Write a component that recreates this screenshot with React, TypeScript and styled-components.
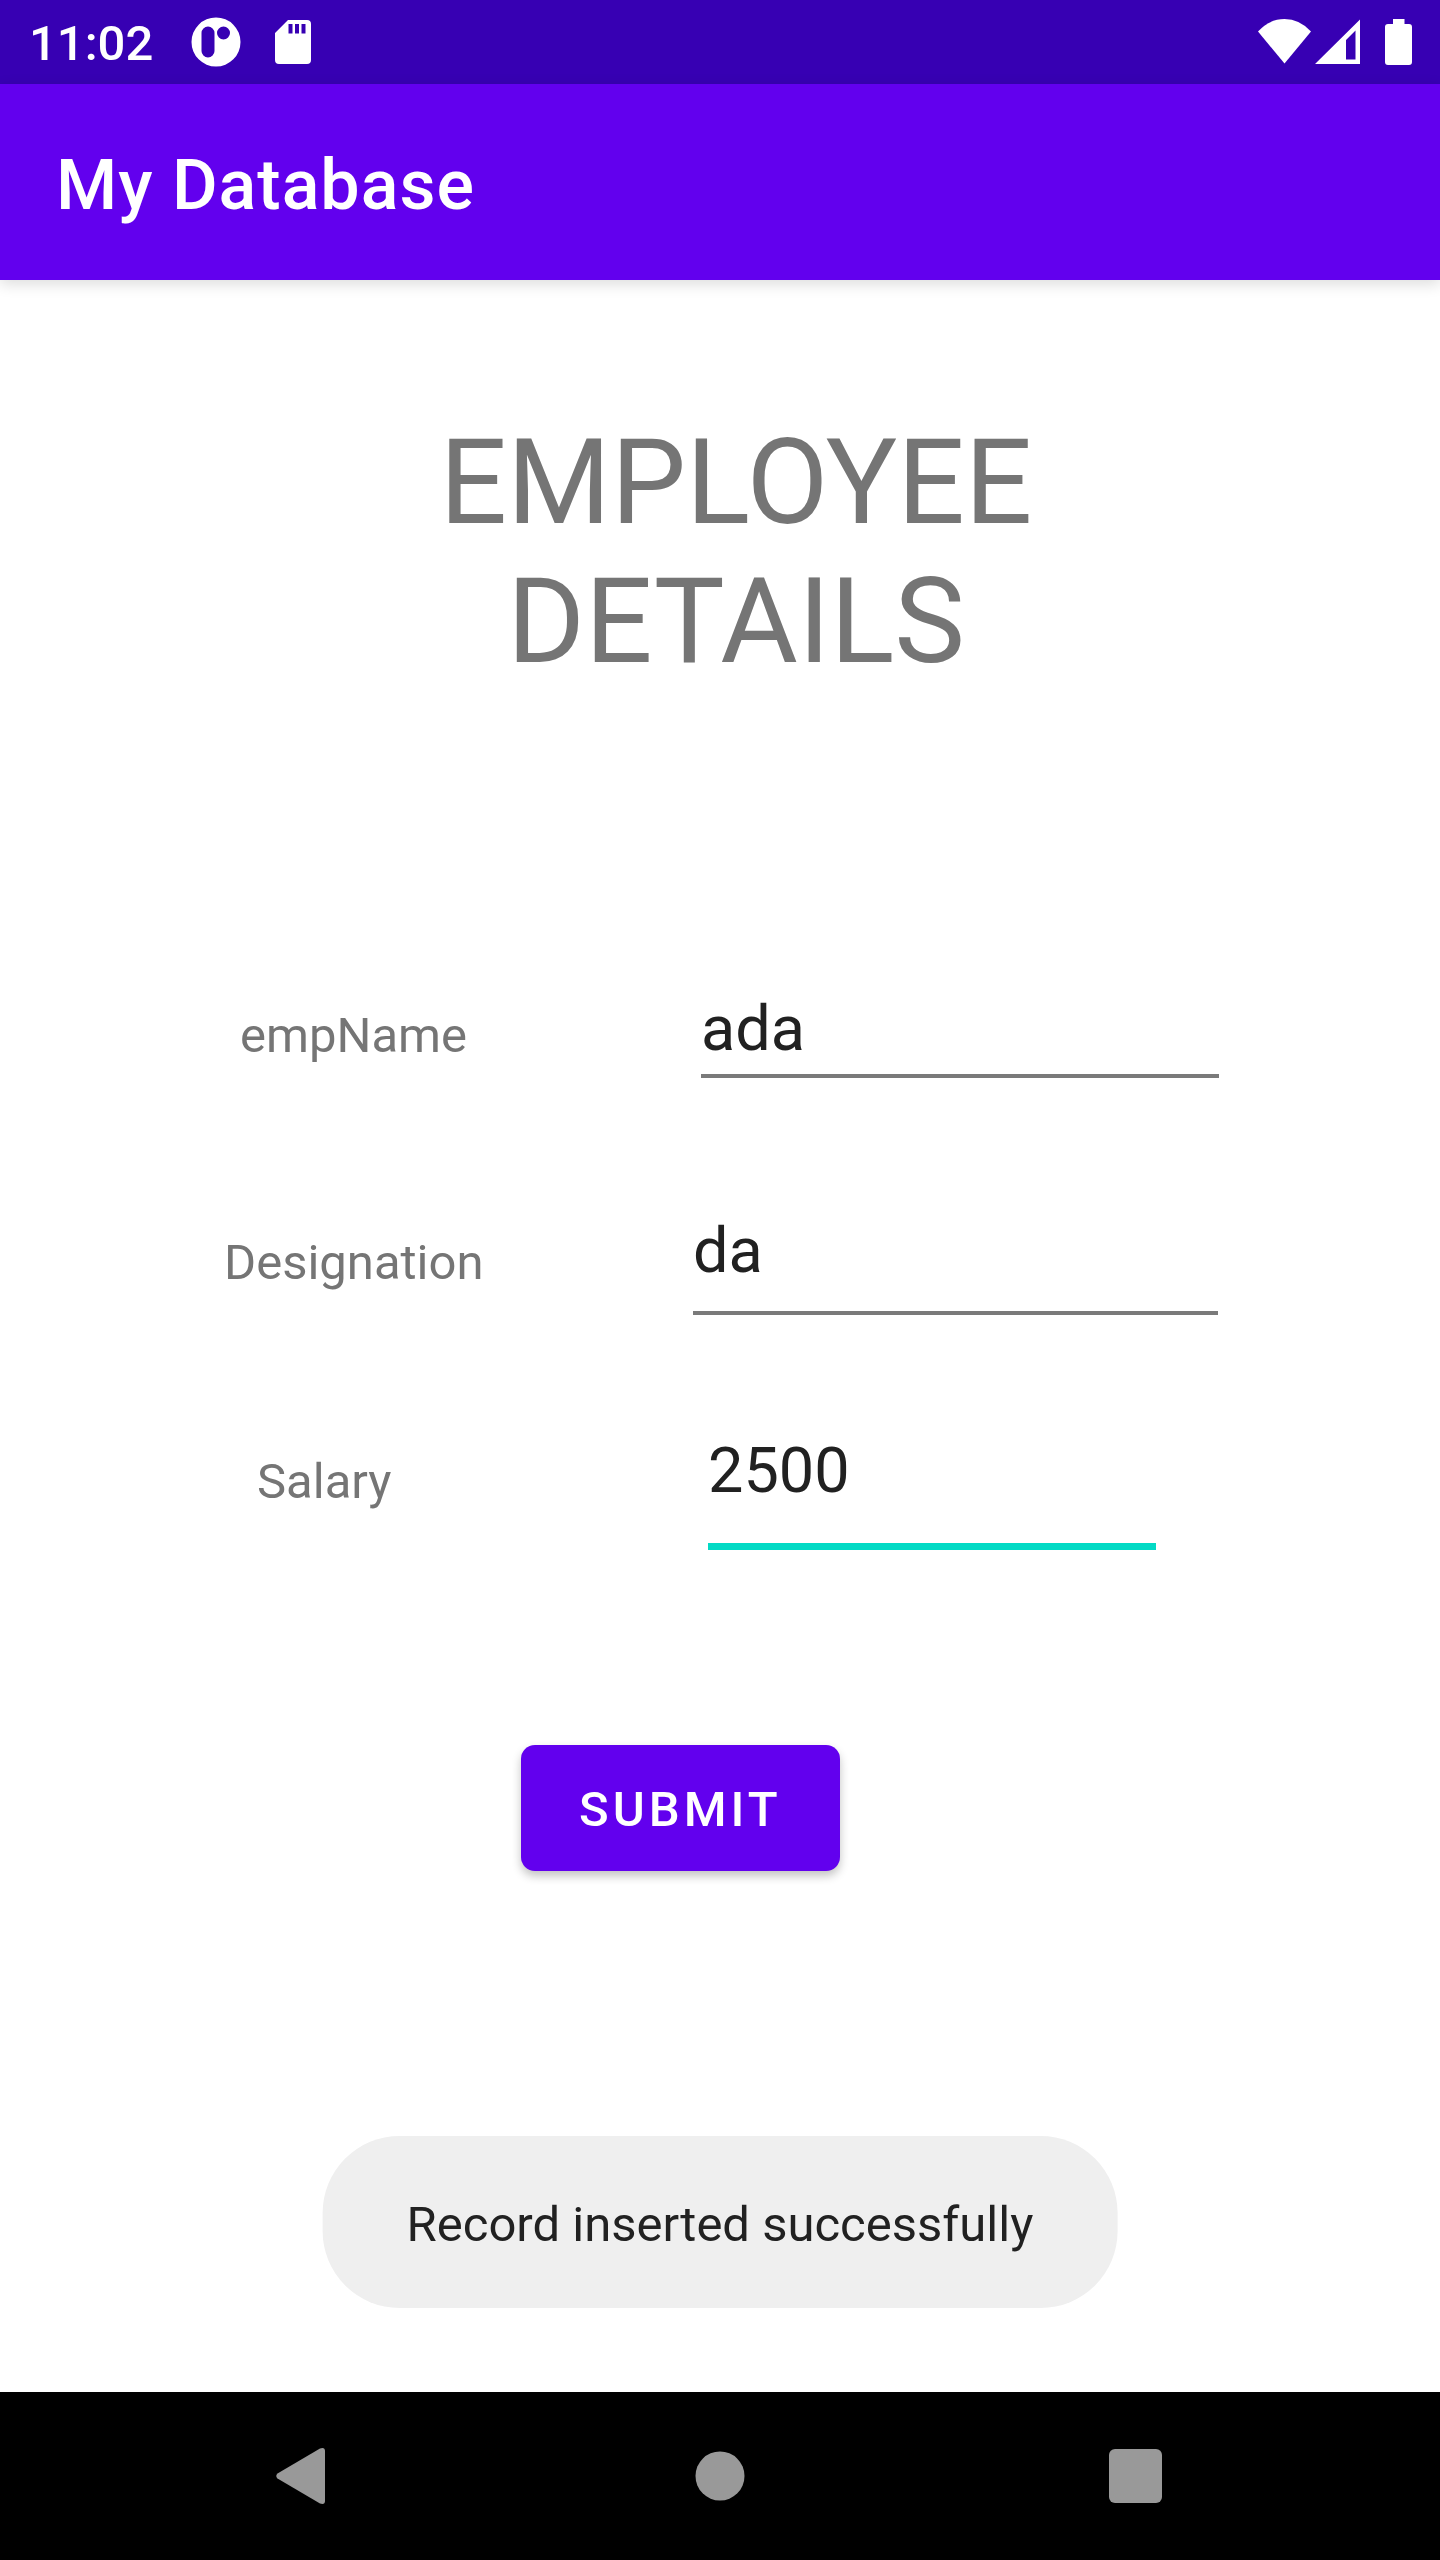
import React from "react";
import styled, { createGlobalStyle } from "styled-components";

const GlobalStyle = createGlobalStyle`
  *, *::before, *::after { box-sizing: border-box; }
  body { margin: 0; background: #fff; font-family: Roboto, "Noto Sans", sans-serif; }
`;

const Screen = styled.div`
  min-height: 100vh;
  display: flex;
  flex-direction: column;
`;

const StatusBar = styled.div`
  height: 84px;
  padding: 0 27px 0 29px;
  display: flex;
  align-items: center;
  justify-content: space-between;
  background: #3700b3;
  color: #fff;
`;

const StatusGroup = styled.div<{ $gap: number }>`
  display: flex;
  align-items: center;
  gap: ${(p) => p.$gap}px;

  svg { display: block; fill: currentColor; }
`;

const Clock = styled.time`
  margin-right: 4px;
  padding-top: 4px;
  font-size: 49px;
  font-weight: 500;
  line-height: 58px;
`;

const AppBar = styled.header`
  position: relative;
  height: 196px;
  padding: 6px 56px 0;
  display: flex;
  align-items: center;
  background: #6200ee;
  color: #fff;
  box-shadow: 0 4px 14px rgba(0, 0, 0, 0.14);
`;

const AppTitle = styled.h1`
  margin: 0;
  font-size: 70px;
  font-weight: 500;
  line-height: 82px;
  letter-spacing: 1px;
`;

const Content = styled.main`
  position: relative;
  flex: 1;
  padding: 133px 0 180px;
`;

const Heading = styled.h2`
  width: 640px;
  max-width: 100%;
  margin: 0 auto 300px;
  padding-left: 32px;
  box-sizing: content-box;
  color: #757575;
  font-size: 119px;
  font-weight: 400;
  line-height: 139px;
  text-align: center;
`;

const Form = styled.form`
  display: flex;
  flex-direction: column;
`;

const Row = styled.div<{ $columns: string; $space: number }>`
  display: grid;
  grid-template-columns: ${(p) => p.$columns};
  margin-bottom: ${(p) => p.$space}px;
`;

const Label = styled.label<{ $top: number }>`
  grid-column: 2;
  padding-top: ${(p) => p.$top}px;
  color: #757575;
  font-size: 49px;
  line-height: 57px;
`;

const Field = styled.input<{ $drop: number; $active?: boolean }>`
  grid-column: 3;
  width: 100%;
  min-width: 0;
  height: ${(p) => 74 + p.$drop + (p.$active ? 7 : 4)}px;
  margin: 0;
  padding: 0 0 ${(p) => p.$drop}px;
  border: 0;
  border-bottom: ${(p) => (p.$active ? "7px solid #03dac5" : "4px solid #7a7a7a")};
  border-radius: 0;
  outline: none;
  background: transparent;
  color: #212121;
  font-family: inherit;
  font-size: 63px;
  line-height: 74px;
`;

const Actions = styled.div`
  display: grid;
  grid-template-columns: 521fr 919fr;
`;

const SubmitButton = styled.button`
  grid-column: 2;
  justify-self: start;
  height: 126px;
  padding: 4px 58px 0;
  border: 0;
  border-radius: 14px;
  background: #6200ee;
  color: #fff;
  font-family: inherit;
  font-size: 49px;
  font-weight: 500;
  line-height: 58px;
  letter-spacing: 4px;
  box-shadow: 0 5px 10px rgba(0, 0, 0, 0.24);
`;

/* Floats over the lower edge of the content */
const Toast = styled.div`
  position: absolute;
  left: 50%;
  bottom: 84px;
  transform: translateX(-50%);
  padding: 60px 84px 55px;
  border-radius: 77px;
  background: #efefef;
  color: #212121;
  font-size: 49px;
  line-height: 57px;
  white-space: nowrap;
`;

const NavBar = styled.nav`
  height: 168px;
  padding: 0 96px;
  display: grid;
  grid-template-columns: repeat(3, 1fr);
  background: #000;
`;

const NavButton = styled.button`
  display: flex;
  align-items: center;
  justify-content: center;
  padding: 0;
  border: 0;
  background: transparent;
  color: #999;

  svg { display: block; fill: currentColor; }
`;

const fields = [
  { id: "empName", label: "empName", value: "ada", start: 240, field: 701, end: 1219, top: 16, drop: 9, space: 135, active: false },
  { id: "designation", label: "Designation", value: "da", start: 224, field: 693, end: 1218, top: 21, drop: 24, space: 118, active: false },
  { id: "salary", label: "Salary", value: "2500", start: 257, field: 708, end: 1156, top: 20, drop: 36, space: 195, active: true },
];

const columnsFor = (start: number, field: number, end: number) =>
  [start, field - start, end - field, 1440 - end].map((n) => `minmax(0, ${n}fr)`).join(" ");

export default function App() {
  return (
    <Screen>
      <GlobalStyle />
      <StatusBar>
        <StatusGroup $gap={34}>
          <Clock>11:02</Clock>
          <svg width="50" height="50" viewBox="0 0 50 50" aria-hidden="true">
            <path fillRule="evenodd" d="M25 .5a24.500 24.500 0 1 1 0 49a24.500 24.500 0 1 1 0-49zM17 9.500a6.500 6.500 0 0 0-6.500 6.500v18a6.500 6.500 0 0 0 13 0V16A6.500 6.500 0 0 0 17 9.500zM32.500 9.500a6.500 6.500 0 1 0 0 13a6.500 6.500 0 1 0 0-13z" />
          </svg>
          <svg width="36" height="46" viewBox="0 0 36 46" aria-hidden="true">
            <path fillRule="evenodd" d="M13 1H32Q36 1 36 5V41Q36 45 32 45H4Q0 45 0 41V14ZM13.500 5v9.500h4V5zM20 5v9.500h4V5zM26.500 5v9.500h4V5z" />
          </svg>
        </StatusGroup>
        <StatusGroup $gap={4}>
          <svg width="53" height="46" viewBox="0 0 53 46" aria-hidden="true">
            <path d="M0 12.500Q11.500 0 26.500 0T53 12.500L26.500 44.500Z" />
          </svg>
          <svg width="45" height="46" viewBox="0 0 45 46" aria-hidden="true">
            <path fillRule="evenodd" d="M45 .5V45H0ZM40.500 11.500L31 21V40.500h9.500Z" />
          </svg>
          <svg width="49" height="46" viewBox="-21 0 49 46" aria-hidden="true">
            <path d="M8 0H19.500V5H24Q27 5 27 8V43Q27 46 24 46H3Q0 46 0 43V8Q0 5 3 5H8Z" />
          </svg>
        </StatusGroup>
      </StatusBar>
      <AppBar>
        <AppTitle>My Database</AppTitle>
      </AppBar>
      <Content>
        <Heading>EMPLOYEE DETAILS</Heading>
        <Form onSubmit={(e) => e.preventDefault()}>
          {fields.map((f) => (
            <Row key={f.id} $columns={columnsFor(f.start, f.field, f.end)} $space={f.space}>
              <Label htmlFor={f.id} $top={f.top}>{f.label}</Label>
              <Field id={f.id} type="text" defaultValue={f.value} $drop={f.drop} $active={f.active} />
            </Row>
          ))}
          <Actions>
            <SubmitButton type="submit">SUBMIT</SubmitButton>
          </Actions>
        </Form>
        <Toast role="status">Record inserted successfully</Toast>
      </Content>
      <NavBar>
        <NavButton type="button" aria-label="Back">
          <svg width="56" height="58" viewBox="0 0 56 58">
            <path d="M1.500 26.500L44 1.500Q49 0 49 4V54Q49 58 44 56.500L1.500 31.500Q-1 29 1.500 26.500Z" />
          </svg>
        </NavButton>
        <NavButton type="button" aria-label="Home">
          <svg width="50" height="50" viewBox="0 0 50 50">
            <circle cx="25" cy="25" r="24.500" />
          </svg>
        </NavButton>
        <NavButton type="button" aria-label="Recent apps">
          <svg width="54" height="54" viewBox="0 0 54 54">
            <rect width="53" height="54" rx="6" />
          </svg>
        </NavButton>
      </NavBar>
    </Screen>
  );
}
